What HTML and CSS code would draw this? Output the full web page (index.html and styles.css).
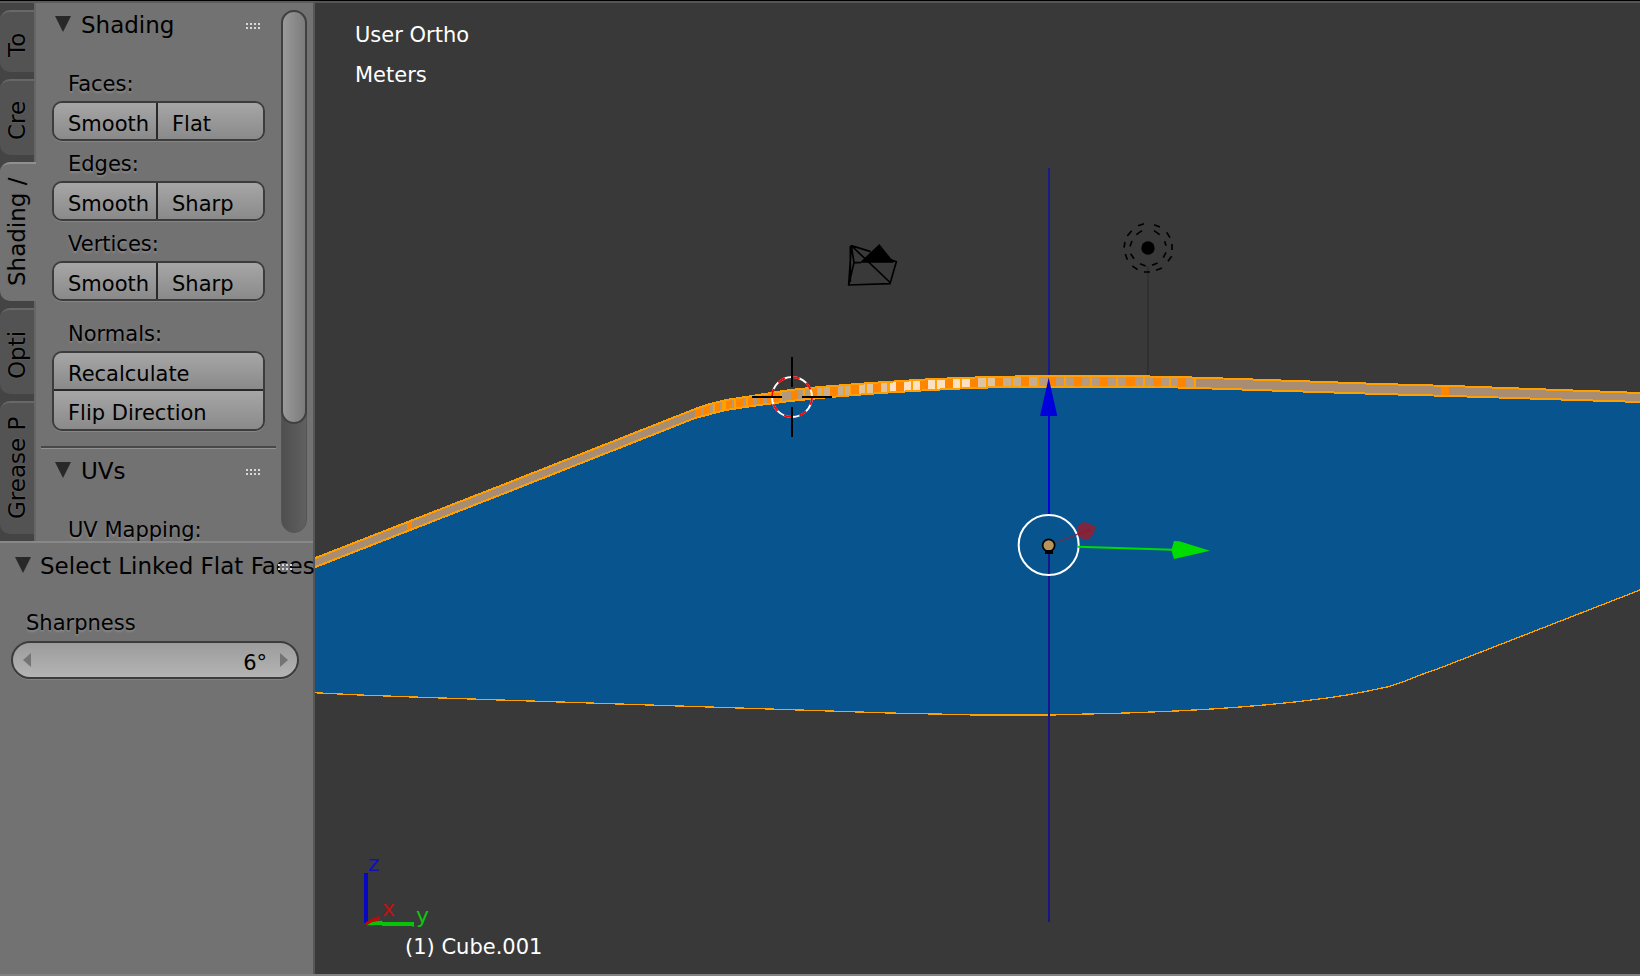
FILE: index.html
```html
<!DOCTYPE html>
<html lang="en">
<head>
<meta charset="utf-8">
<title>3D View</title>
<link rel="stylesheet" href="styles.css">
</head>
<body>
<div class="editor">
  <aside class="shelf">
    <section class="tools">
      <div class="rail" role="tablist" aria-label="Tool tabs">
        <button class="tab tab-tools" role="tab">To</button>
        <button class="tab tab-create" role="tab">Cre</button>
        <button class="tab tab-shading active" role="tab" aria-selected="true">Shading /</button>
        <button class="tab tab-options" role="tab">Opti</button>
        <button class="tab tab-grease" role="tab">Grease P</button>
      </div>
      <div class="panels">
        <div class="panel">
          <button class="panel-head"><span class="tri"></span><span class="title">Shading</span><span class="grip"></span></button>
          <div class="label first">Faces:</div>
          <div class="row"><button>Smooth</button><button>Flat</button></div>
          <div class="label">Edges:</div>
          <div class="row"><button>Smooth</button><button>Sharp</button></div>
          <div class="label">Vertices:</div>
          <div class="row"><button>Smooth</button><button>Sharp</button></div>
          <div class="label spaced">Normals:</div>
          <div class="stack"><button>Recalculate</button><button>Flip Direction</button></div>
        </div>
        <div class="panel next">
          <button class="panel-head"><span class="tri"></span><span class="title">UVs</span><span class="grip"></span></button>
          <div class="label first">UV Mapping:</div>
        </div>
      </div>
      <div class="scroll"><div class="thumb"></div></div>
    </section>
    <section class="operator">
      <button class="panel-head"><span class="tri"></span><span class="title">Select Linked Flat Faces</span><span class="grip"></span></button>
      <label class="op-label" for="sharpness">Sharpness</label>
      <div class="number">
        <button class="step left" aria-label="Decrease"></button>
        <input id="sharpness" type="text" value="6°">
        <button class="step right" aria-label="Increase"></button>
      </div>
    </section>
  </aside>
  <main class="view">
    <svg class="scene" viewBox="315 3 1325 971" preserveAspectRatio="xMidYMid slice" aria-hidden="true">
      <defs>
        <clipPath id="rim">
          <path d="M300 564L500 486L680 415L695 409L710 404L726 400L752 396L790 390L820 387L870 383L933 379L989 377L1041 376L1124 376L1176 377L1239 379L1380 384L1451 386L1640 393V402L1451 396L1380 394L1257 390L1196 388L1158 387L1007 387L970 388L930 390L880 393L830 397L790 401L752 406L726 410L695 418L680 424L500 495L300 573Z"/>
        </clipPath>
      </defs>
      <path fill="#1a1a88" d="M1048 168h2v210h-2z"/>
      <path fill="#303030" d="M1147 266h2v110h-2z"/>
      <g shape-rendering="crispEdges">
        <path fill="#08548e" d="M300 573L500 495L680 424L695 418L726 410L752 406L790 401L830 397L880 393L930 390L970 388L1007 387L1158 387L1196 388L1257 390L1380 394L1451 396L1640 402V590L1440 668L1423 674L1403 682L1387 687L1368 691L1347 695L1327 698L1295 702L1264 705L1240 707L1212 709L1176 711L1127 713L1050 715H980L889 713L500 700L413 697L360 695L300 692Z"/>
        <g clip-path="url(#rim)">
          <path fill="#a98d72" d="M300 370H695V580H300zM1196 370h444v40h-444z"/>
          <path fill="#ffa000" d="M695 370h501v60H695z"/>
          <path fill="#b39a7d" d="M701 370h3v60h-3zM710 370h3v60h-3zM720 370h2v60h-2zM732 370h2v60h-2zM743 370h3v60h-3zM753 370h4v60h-4zM763 370h4v60h-4zM782 370h9v60h-9zM798 370h5v60h-5zM805 370h5v60h-5z"/>
          <path fill="#c8ad8e" d="M818 370h4v60h-4zM824 370h6v60h-6zM838 370h5v60h-5zM845 370h5v60h-5zM1003 370h8v30h-8zM1013 370h8v30h-8zM1029 370h8v30h-8z"/>
          <path fill="#e2c3a0" d="M859 370h6v60h-6zM867 370h6v60h-6zM881 370h6v60h-6zM978 370h8v30h-8zM988 370h7v30h-7z"/>
          <path fill="#ffe0c0" d="M890 370h6v60h-6zM904 370h7v60h-7zM913 370h7v60h-7zM928 370h7v60h-7zM937 370h8v60h-8zM953 370h7v60h-7zM962 370h8v30h-8z"/>
          <path fill="#b89a80" d="M1039 370h9v30h-9zM1056 370h8v30h-8zM1066 370h8v30h-8zM1082 370h8v30h-8zM1092 370h8v30h-8zM1108 370h8v30h-8zM1118 370h8v30h-8zM1135 370h8v30h-8zM1145 370h8v30h-8zM1161 370h8v30h-8zM1171 370h7v30h-7zM1186 370h8v30h-8z"/>
          <path fill="#ff8400" d="M695 370h6v60h-6zM704 370h6v60h-6zM715 370h5v60h-5zM726 370h6v60h-6zM736 370h7v60h-7zM748 370h5v60h-5zM757 370h6v60h-6zM767 370h13v60h-13zM791 370h7v60h-7zM810 370h7v60h-7zM830 370h8v60h-8zM851 370h8v60h-8zM873 370h8v60h-8zM896 370h8v60h-8zM920 370h8v60h-8zM945 370h8v60h-8zM970 370h8v30h-8zM995 370h8v30h-8zM1021 370h8v30h-8zM1048 370h8v30h-8zM1074 370h8v30h-8zM1100 370h8v30h-8zM1126 370h9v30h-9zM1153 370h8v30h-8zM1178 370h8v30h-8zM1441 370h8v40h-8zM407 480h5v60h-5z"/>
        </g>
        <g fill="none" stroke="#ffa000" stroke-width="2">
          <path d="M300 564L500 486L680 415L695 409L710 404L726 400L752 396L790 390L820 387L870 383L933 379L989 377L1041 376L1124 376L1176 377L1239 379L1380 384L1451 386L1640 393"/>
          <path d="M300 573L500 495L680 424L695 418L726 410L752 406L790 401L830 397L880 393L930 390L970 388L1007 387L1158 387L1196 388L1257 390L1380 394L1451 396L1640 402"/>
        </g>
        <path fill="none" stroke="#ffa000" stroke-width="1.3" d="M300 692L360 695L413 697L500 700L889 713L980 715M1050 715L1127 713L1176 711L1212 709L1240 707L1264 705L1295 702L1327 698L1347 695L1368 691L1387 687L1403 682L1423 674L1440 668L1640 590"/>
        <path fill="#ffa000" d="M970 714h86v2h-86z"/>
      </g>
      <path fill="#1a1488" d="M1048 554h2v368h-2z"/>
      <path fill="#0000e0" d="M1048 416h2v99h-2z"/>

      <!-- camera, lamp and up arrow -->
      <svg x="820" y="210" width="380" height="220" viewBox="0 0 1140 660">
        <path fill="none" stroke="#000" stroke-width="5" d="M94 107L86 225L210 221L229 155L212 149M94 107L102 158L86 225M152 125L94 107L212 219M102 158H122M91 107V215"/>
        <path d="M178 102L214 147L228 154L218 158H119Z"/>
        <circle cx="984" cy="114" r="20"/>
        <path fill="none" stroke="#000" stroke-width="5" d="M954 47L972 41M1002 44L1020 51M1040 67L1050 83M1056 102V120M1055 139L1044 154M1026 174L1008 181M972 186H990M953 179L937 168M922 149L916 132M912 113L915 96M922 78L935 62M949 74L966 62M1002 62L1019 74M1034 94L1038 107M1038 127L1030 143M1013 159L996 166M977 168L960 161M942 146L932 131M930 109L936 93"/>
        <path fill="#0000dd" d="M686 503L712 618H660Z"/>
      </svg>

      <!-- 3D cursor -->
      <svg x="680" y="340" width="300" height="110" viewBox="0 0 900 330">
        <circle cx="336" cy="171" r="60" fill="none" stroke="#fff" stroke-width="6"/>
        <circle cx="336" cy="171" r="60" fill="none" stroke="#f00" stroke-width="6" pathLength="16" stroke-dasharray="1 1" transform="rotate(-90 336 171)"/>
        <path d="M333 51h6v90h-6zM333 201h6v90h-6zM216 168h90v6h-90zM366 168h90v6h-90z"/>
      </svg>

      <!-- transform manipulator -->
      <svg x="990" y="480" width="250" height="120" viewBox="0 0 750 360">
        <circle cx="176" cy="195" r="90" fill="none" stroke="#fff" stroke-width="6"/>
        <path fill="#7c2840" d="M263 138L272 130L286 126L300 132L316 138L314 154L304 173L290 180L276 176L264 164Z"/>
        <path stroke="#6c3050" stroke-width="4" d="M200 187L262 163"/>
        <path stroke="#981828" stroke-width="6" d="M262 163L300 150"/>
        <path fill="none" stroke="#00dc00" stroke-width="6" d="M262 200L548 209"/>
        <path fill="#00dc00" d="M552 183L568 184L660 212L552 237L544 211Z"/>
        <circle cx="176" cy="196" r="18" fill="#b8935c" stroke="#000" stroke-width="5"/>
        <path d="M165 210h24v12h-24z"/>
      </svg>

      <!-- mini axis -->
      <svg x="340" y="840" width="120" height="100" viewBox="0 0 360 300">
        <path fill="#0808c4" d="M72 99h12v150h-12z"/>
        <path fill="#08c408" d="M80 256L96 245L126 242L128 246L222 246V261L214 258H126V255Z"/>
        <path fill="#c40808" d="M76 248L92 238L120 227V239L96 247L80 255Z"/>
      </svg>
      <g class="axis-names">
        <text x="368" y="871" fill="#1010c0">z</text>
        <text x="382" y="916" fill="#c41010">x</text>
        <text x="416" y="923" fill="#10c410">y</text>
      </g>
    </svg>
    <div class="overlay">
      <div class="view-info"><div>User Ortho</div><div>Meters</div></div>
      <div class="object-info">(1) Cube.001</div>
    </div>
  </main>
</div>
</body>
</html>
```
FILE: styles.css
```css
* { box-sizing: border-box; }
body {
  margin: 0;
  background: #393939;
  font-family: "DejaVu Sans", sans-serif;
  font-size: 21px;
  color: #000;
}
button, input {
  font: inherit;
  color: inherit;
  border: 0;
  margin: 0;
  padding: 0;
  background: none;
  text-align: left;
}
.editor {
  display: flex;
  height: 100vh;
  border-top: 1px solid #000;
  border-bottom: 2px solid #808080;
}
.shelf {
  flex: none;
  width: 315px;
  display: flex;
  flex-direction: column;
  background: #727272;
  border-top: 2px solid #5c5c5c;
  border-right: 2px solid #575757;
  text-shadow: 0 2px 2px #8a8a8a;
}
.tools {
  flex: none;
  height: 538px;
  display: flex;
  overflow: hidden;
}
.rail {
  flex: none;
  width: 36px;
  padding-top: 7px;
  display: flex;
  flex-direction: column;
  gap: 7px;
  background: #444;
  border-right: 2px solid #666;
}
.tab {
  writing-mode: vertical-rl;
  transform: rotate(180deg);
  width: 34px;
  line-height: 34px;
  padding-top: 15px;
  font-size: 23px;
  white-space: nowrap;
  background: #535353;
  border-bottom: 2px solid #686868;
  border-radius: 0 10px 10px 0;
  text-shadow: 0 0 2px #6c6c6c;
}
.tab.active {
  width: 36px;
  margin-right: -2px;
  padding-left: 2px;
  background: #727272;
  border-bottom-color: #909090;
}
.tab-tools { height: 62px; }
.tab-create { height: 76px; }
.tab-shading { height: 139px; }
.tab-options { height: 86px; }
.tab-grease { height: 133px; }

.panels {
  flex: 1;
  min-width: 0;
  padding: 0 5px;
}
.panel { padding: 0 11px; }
.panel-head {
  width: 100%;
  height: 40px;
  display: flex;
  align-items: center;
  gap: 10px;
  font-size: 23px;
  white-space: nowrap;
}
.panel .panel-head { padding: 2px 4px 0 3px; }
.tri {
  flex: none;
  width: 16px;
  height: 16px;
  background: #282828;
  clip-path: polygon(0 0, 100% 0, 50% 100%);
}
.title {
  flex: 1;
  min-width: 0;
  padding-top: 2px;
}
.grip {
  flex: none;
  width: 15px;
  height: 7px;
  margin-top: 5px;
  background: repeating-linear-gradient(90deg, #d8d8d8 0 2px, transparent 2px 4px);
  clip-path: polygon(0 0, 100% 0, 100% 2px, 0 2px, 0 4px, 100% 4px, 100% 6px, 0 6px);
}
.label {
  padding: 6px 0 0 16px;
  line-height: 34px;
}
.label.first { margin-top: 18px; }
.label.spaced { margin-top: 10px; }
.row, .stack {
  display: flex;
  border: 2px solid #3c3c3c;
  border-radius: 10px;
  overflow: hidden;
  box-shadow: 0 1px 0 #858585;
  text-shadow: none;
}
.row button, .stack button {
  flex: 1;
  height: 36px;
  padding: 5px 0 0 14px;
  background: linear-gradient(#a6a6a6, #8a8a8a);
  white-space: nowrap;
}
.row button:first-child { flex: none; width: 102px; }
.row button + button { border-left: 2px solid #282828; }
.stack { flex-direction: column; }
.stack button { flex: none; }
.stack button + button { height: 40px; border-top: 2px solid #282828; }
.panel.next {
  margin-top: 15px;
  border-top: 2px solid #484848;
  box-shadow: inset 0 1px 0 #929292;
  padding-top: 1px;
}
.scroll {
  flex: none;
  width: 26px;
  height: 523px;
  margin: 7px 6px 0 0;
  border-radius: 13px;
  background: linear-gradient(90deg, #4f4f4f, #606060);
  border: 1px solid #555;
}
.thumb {
  height: 414px;
  margin: -1px;
  border: 2px solid #404040;
  border-radius: 13px;
  background: linear-gradient(90deg, #999, #7c7c7c);
}
.operator {
  flex: 1;
  display: flex;
  flex-direction: column;
  border-top: 2px solid #888;
  padding: 2px 14px 0 11px;
}
.operator .panel-head {
  padding: 0 6px 0 4px;
  gap: 9px;
}
.operator .title { padding-top: 1px; }
.op-label {
  padding: 21px 0 0 15px;
  line-height: 35px;
}
.number {
  height: 38px;
  display: flex;
  align-items: center;
  padding: 0 9px 0 10px;
  border: 2px solid #3c3c3c;
  border-radius: 19px;
  background: linear-gradient(#9c9c9c, #b4b4b4);
  box-shadow: 0 1px 0 #858585;
  text-shadow: none;
}
.number input {
  flex: 1;
  min-width: 0;
  padding: 6px 13px 0 0;
  text-align: right;
}
.step {
  width: 8px;
  height: 14px;
  background: #747474;
}
.step.left { clip-path: polygon(100% 0, 100% 100%, 0 50%); }
.step.right { clip-path: polygon(0 0, 100% 50%, 0 100%); }

.view {
  flex: 1;
  min-width: 0;
  position: relative;
  border-top: 2px solid #555;
}
.scene {
  position: absolute;
  inset: 0;
  width: 100%;
  height: 100%;
}
.axis-names { font-size: 22px; }
.overlay {
  position: absolute;
  inset: 0;
  display: flex;
  flex-direction: column;
  justify-content: space-between;
  padding: 12px 40px 7px;
  color: #fff;
  line-height: 40px;
}
.object-info { padding-left: 50px; }
```
